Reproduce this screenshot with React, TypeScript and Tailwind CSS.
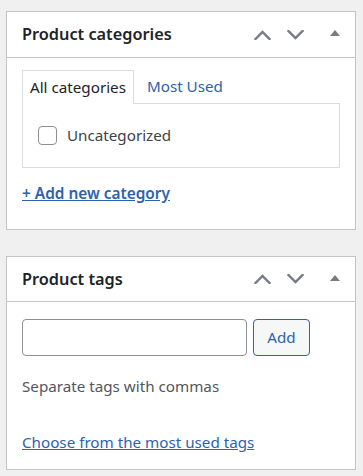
import React from 'react';

const font = { fontFamily: '"Noto Sans", "Open Sans", sans-serif' };

const Chevron = ({ up }: { up?: boolean }) => (
  <svg width="17" height="10" viewBox="0 0 17 10" fill="none">
    <path
      d={up ? 'M1.5 9 L8.5 2 L15.5 9' : 'M1.5 1 L8.5 8 L15.5 1'}
      stroke="#787c82"
      strokeWidth="2.4"
      strokeLinecap="square"
    />
  </svg>
);

const Triangle = () => (
  <svg width="10" height="6" viewBox="0 0 10 6">
    <path d="M0 6 L5 0 L10 6 Z" fill="#787c82" />
  </svg>
);

const PanelHeader = ({ title, h }: { title: string; h: string }) => (
  <div className={`flex items-center border-b border-[#c3c4c7] pl-[15px] pr-[4px] ${h}`}>
    <h2 className="text-[16.3px] font-semibold text-[#1d2327] leading-none">{title}</h2>
    <div className="ml-auto flex items-center">
      <button className="w-[33px] h-[36px] flex items-center justify-center">
        <Chevron up />
      </button>
      <button className="w-[33px] h-[36px] flex items-center justify-center">
        <Chevron />
      </button>
      <button className="ml-[6px] w-[33px] h-[36px] flex items-center justify-center pb-[3px]">
        <Triangle />
      </button>
    </div>
  </div>
);

export default function App() {
  return (
    <div style={font} className="min-h-[476px] w-[363px] bg-[#f0f0f1] pt-[11px] pl-[6px] pr-[7px] text-[#3c434a]">
      {/* Product categories */}
      <div className="bg-white border border-[#c3c4c7] h-[219px]">
        <PanelHeader title="Product categories" h="h-[46px]" />
        <div className="px-[15px] pt-[11px]">
          <div className="flex items-end">
            <div className="relative z-10 -mb-px h-[34px] bg-white border border-b-0 border-[#dcdcde] px-[7px] flex items-center text-[15.2px] text-[#1d2327]">
              All categories
            </div>
            <a className="ml-[13px] h-[34px] flex items-center text-[15.2px] text-[#2c62b0]">Most Used</a>
          </div>
          <div className="h-[65px] border border-[#dcdcde] pt-[22px] pl-[15px]">
            <label className="flex items-center gap-[10px] text-[15.2px] text-[#3c434a] leading-[19px]">
              <span className="w-[19px] h-[19px] rounded-[4px] border border-[#8c8f94] bg-white shrink-0" />
              Uncategorized
            </label>
          </div>
          <div className="mt-[13px]">
            <a className="text-[15.4px] font-semibold text-[#2c62b0] underline leading-[24px]">+ Add new category</a>
          </div>
        </div>
      </div>

      {/* Product tags */}
      <div className="mt-[26px] bg-white border border-[#c3c4c7] h-[214px]">
        <PanelHeader title="Product tags" h="h-[45px]" />
        <div className="px-[15px] pt-[17px]">
          <div className="flex gap-[6px]">
            <div className="w-[225px] h-[37px] rounded-[4px] border border-[#8c8f94] bg-white" />
            <button className="w-[57px] h-[37px] rounded-[4px] border border-[#2c62b0] bg-[#f6f7f7] text-[15.2px] text-[#2c62b0]">
              Add
            </button>
          </div>
          <p className="mt-[18px] text-[15.2px] leading-[24px] text-[#50575e]">Separate tags with commas</p>
          <p className="mt-[32px] leading-[24px]">
            <a className="text-[15.2px] text-[#2c62b0] underline">Choose from the most used tags</a>
          </p>
        </div>
      </div>
    </div>
  );
}
